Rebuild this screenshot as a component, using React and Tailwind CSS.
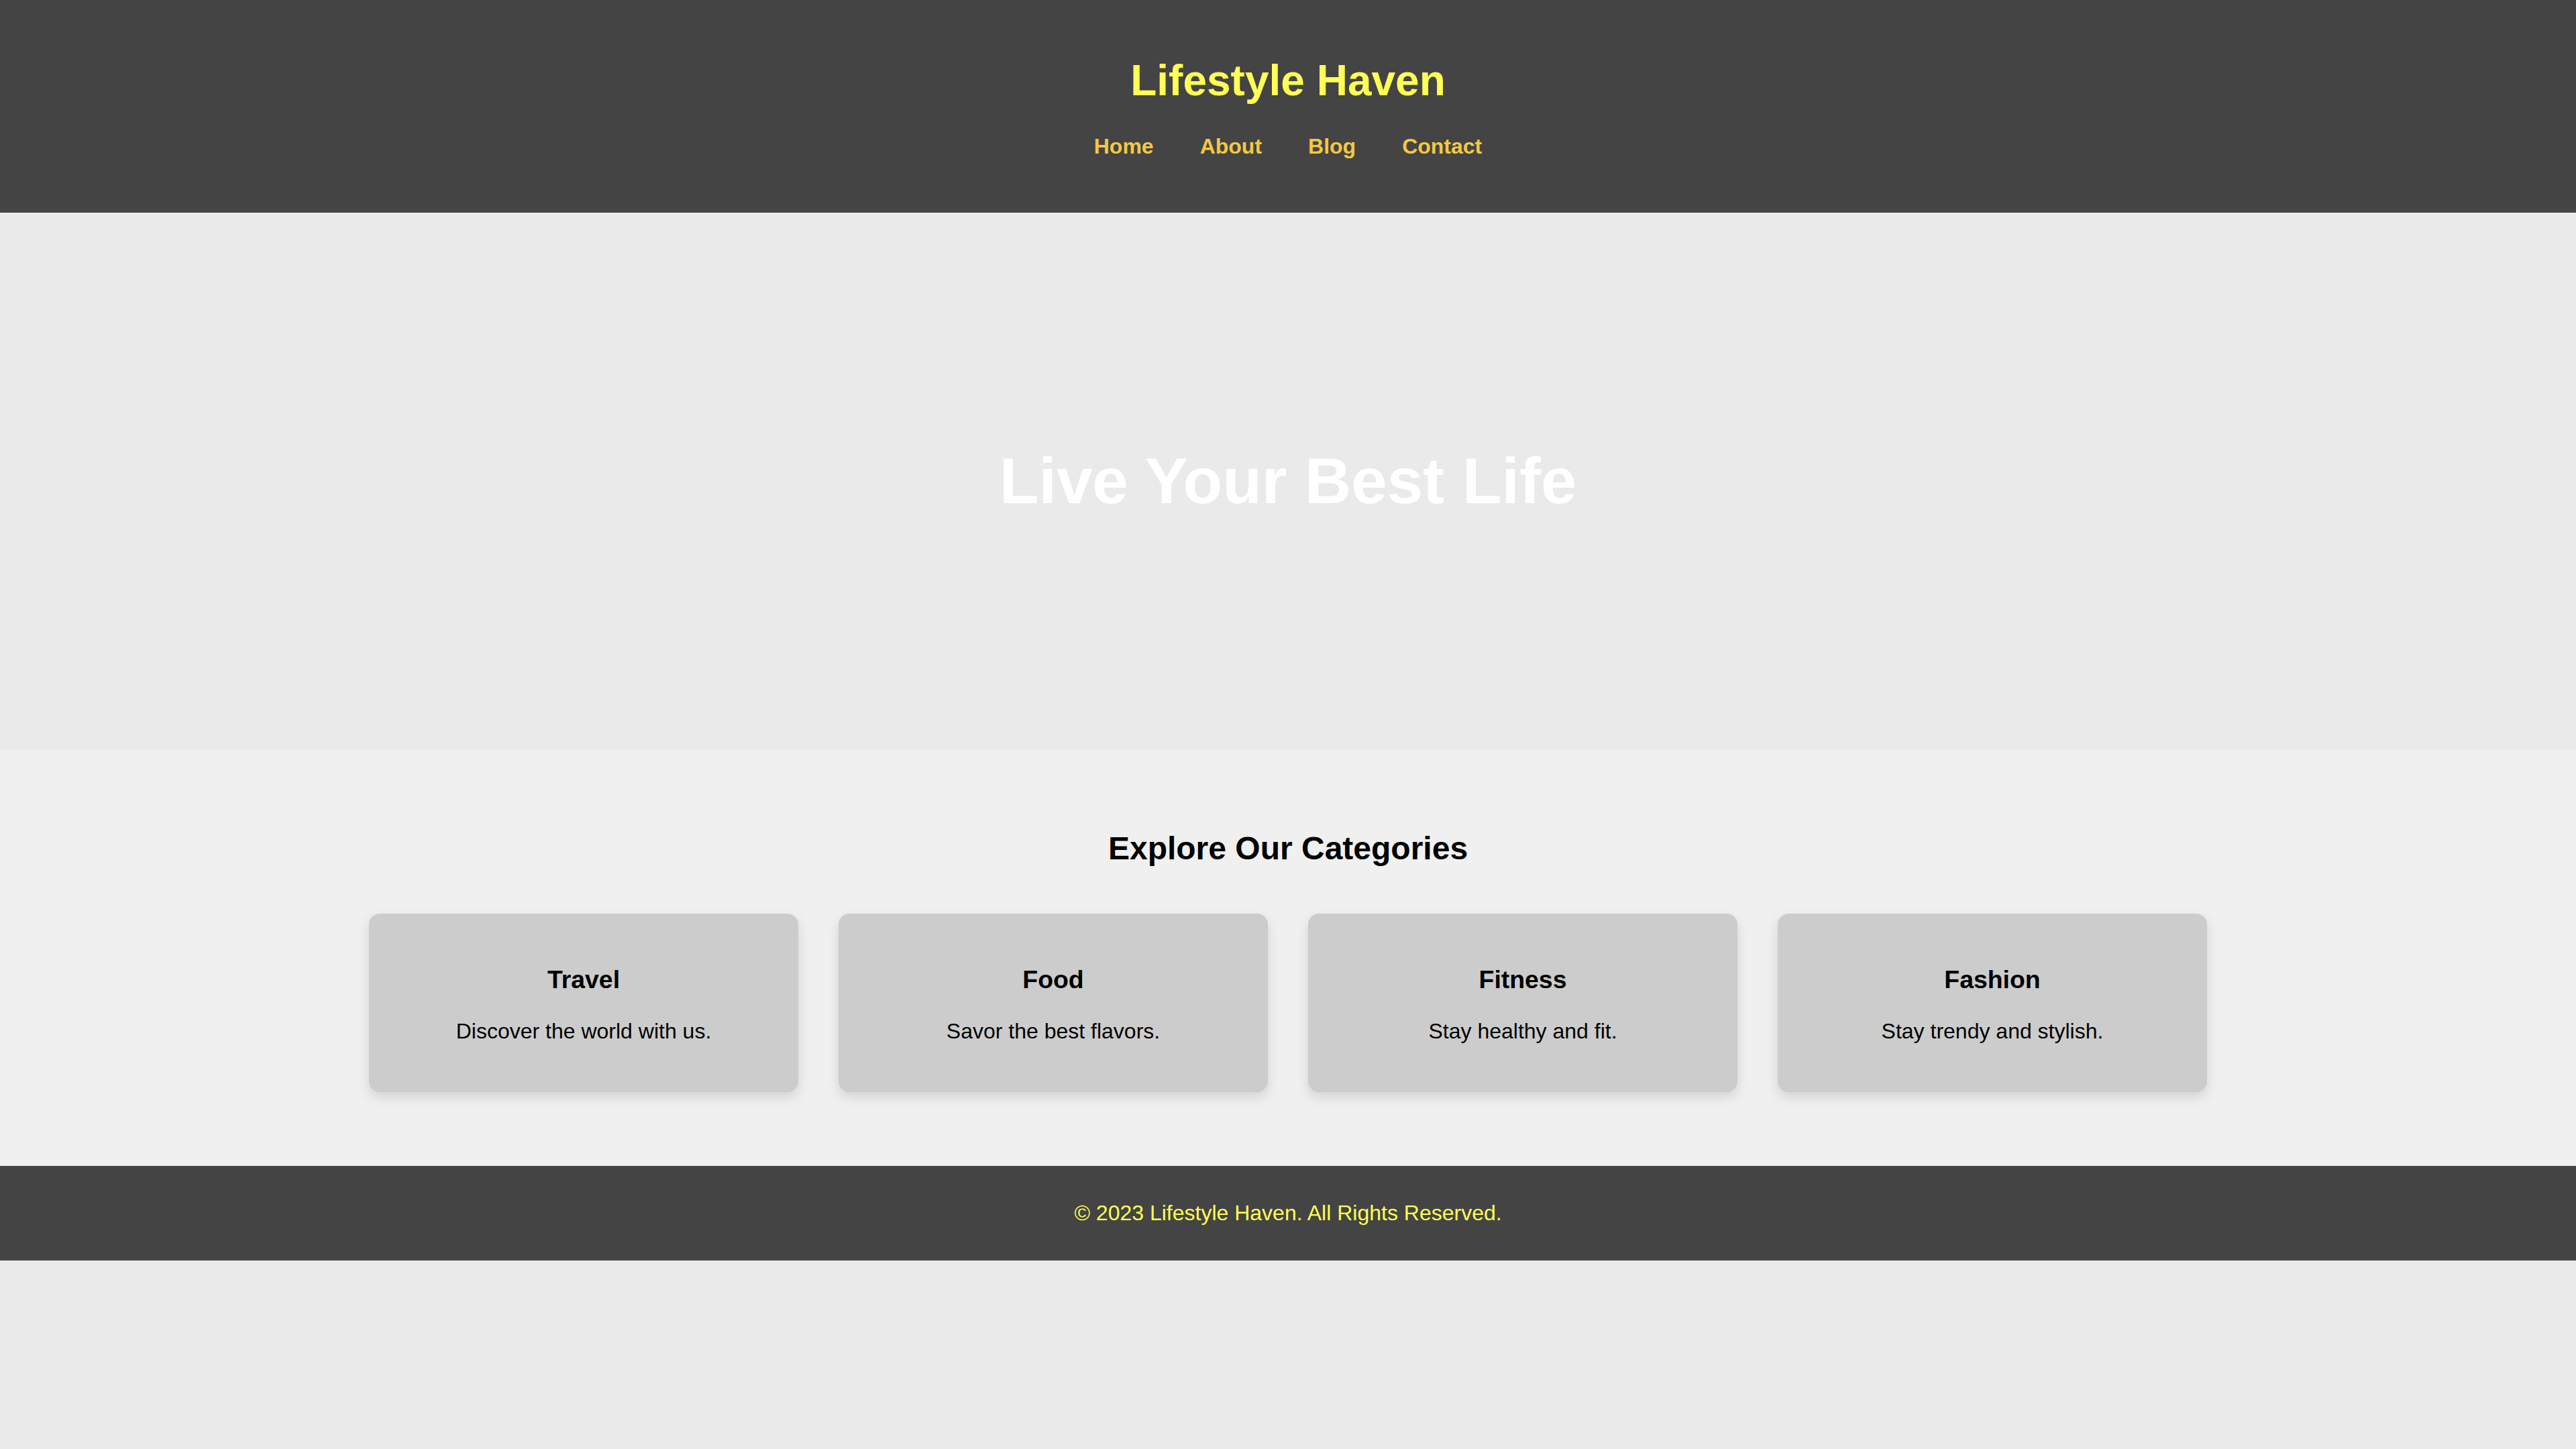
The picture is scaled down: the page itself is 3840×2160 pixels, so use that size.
const categories = [
    { title: "Travel", text: "Discover the world with us." },
    { title: "Food", text: "Savor the best flavors." },
    { title: "Fitness", text: "Stay healthy and fit." },
    { title: "Fashion", text: "Stay trendy and stylish." },
]

const App = () => {
    return (
        <div className="min-h-screen bg-[#eaeaea] font-['Liberation_Sans',Arial,sans-serif] text-[32px] text-black">
            <header className="bg-[#444444] pt-[83px] pb-[80px] text-center">
                <h1 className="text-[64px] leading-[74px] font-bold text-[#ffff55]">Lifestyle Haven</h1>
                <nav className="mt-[43px] flex justify-center gap-[69px] leading-[37px]">
                    <a href="#" className="font-bold text-[#f5c842]">Home</a>
                    <a href="#" className="font-bold text-[#f5c842]">About</a>
                    <a href="#" className="font-bold text-[#f5c842]">Blog</a>
                    <a href="#" className="font-bold text-[#f5c842]">Contact</a>
                </nav>
            </header>

            <section className="h-[800px] flex items-center justify-center bg-[#eaeaea]">
                <h2 className="text-[96px] leading-[110px] font-bold text-white">Live Your Best Life</h2>
            </section>

            <section className="bg-[#f0f0f0] py-[80px] text-center">
                <h2 className="my-[40px] text-[48px] leading-[55px] font-bold">Explore Our Categories</h2>
                <div className="flex justify-center">
                    {categories.map((cat) => (
                        <div key={cat.title} className="w-[640px] mx-[30px] my-[30px] p-[40px] rounded-[16px] bg-[#cccccc] shadow-[0_8px_18px_rgba(0,0,0,0.12)]">
                            <h3 className="mt-[37px] text-[37.4px] leading-[43px] font-bold">{cat.title}</h3>
                            <p className="mt-[37px] mb-[32px] leading-[37px]">{cat.text}</p>
                        </div>
                    ))}
                </div>
            </section>

            <footer className="bg-[#444444] py-[52px] text-center">
                <p className="leading-[37px] text-[#ffff55]">© 2023 Lifestyle Haven. All Rights Reserved.</p>
            </footer>
        </div>
    )
}

export default App
